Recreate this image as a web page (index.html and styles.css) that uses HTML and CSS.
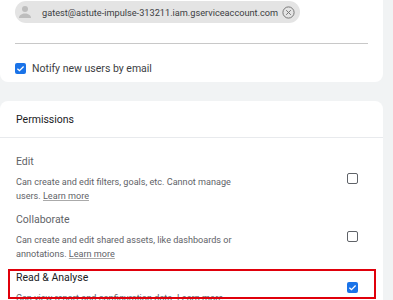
FILE: index.html
```html
<!DOCTYPE html>
<html>
<head>
<meta charset="utf-8">
<link rel="stylesheet" href="styles.css">
</head>
<body>
<div class="page">
  <div class="card card-top">
    <div class="chip">
      <svg class="avatar" viewBox="0 0 16 16" width="16" height="16"><circle cx="8" cy="5" r="3" fill="#bdbdbd"/><path d="M2 14c0-3 3-4.5 6-4.5s6 1.5 6 4.5z" fill="#bdbdbd"/></svg>
      <span class="chip-text">gatest@astute-impulse-313211.iam.gserviceaccount.com</span>
      <svg class="close" viewBox="0 0 13 13" width="13" height="13"><circle cx="6.5" cy="6.5" r="5.6" fill="none" stroke="#777" stroke-width="1"/><path d="M4.2 4.2l4.6 4.6M8.8 4.2l-4.6 4.6" stroke="#777" stroke-width="1"/></svg>
    </div>
    <div class="divider"></div>
    <label class="notify">
      <span class="cb checked"><svg viewBox="0 0 12 12" width="11" height="11"><path d="M2.6 6.2l2.3 2.2 4.5-4.6" fill="none" stroke="#fff" stroke-width="1.4"/></svg></span>
      <span class="notify-text">Notify new users by email</span>
    </label>
  </div>
  <div class="card card-perm">
    <div class="perm-head">Permissions</div>
    <div class="perm-list">
      <div class="perm-row">
        <div class="perm-info">
          <div class="perm-title">Edit</div>
          <div class="perm-desc">Can create and edit filters, goals, etc. Cannot manage users. <span class="link">Learn more</span></div>
        </div>
        <span class="cb"></span>
      </div>
      <div class="perm-row">
        <div class="perm-info">
          <div class="perm-title">Collaborate</div>
          <div class="perm-desc">Can create and edit shared assets, like dashboards or annotations. <span class="link">Learn more</span></div>
        </div>
        <span class="cb"></span>
      </div>
      <div class="perm-row highlight">
        <div class="perm-info">
          <div class="perm-title strong">Read &amp; Analyse</div>
          <div class="perm-desc">Can view report and configuration data. <span class="link">Learn more</span></div>
        </div>
        <span class="cb checked"><svg viewBox="0 0 12 12" width="11" height="11"><path d="M2.6 6.2l2.3 2.2 4.5-4.6" fill="none" stroke="#fff" stroke-width="1.4"/></svg></span>
      </div>
    </div>
  </div>
</div>
</body>
</html>
```
FILE: styles.css
```css
html, body {
  margin: 0;
  padding: 0;
  background: #f1f3f4;
  font-family: Roboto, "Liberation Sans", Arial, sans-serif;
  color: #3c4043;
  overflow: hidden;
  height: 300px;
}
.page {
  width: 383px;
}
.card {
  background: #fff;
}
.card-top {
  border-radius: 0 0 8px 8px;
  padding: 1px 15px 0;
  height: 82px;
  box-sizing: border-box;
}
.chip {
  display: inline-flex;
  align-items: center;
  height: 22px;
  background: #e4e4e4;
  border-radius: 11px;
  padding: 0 5px 0 2px;
  box-sizing: border-box;
}
.avatar {
  display: block;
  margin-right: 9px;
}
.chip-text {
  font-size: 9.2px;
  color: #3c4043;
  margin-right: 4px;
  white-space: nowrap;
}
.close {
  display: block;
}
.divider {
  height: 1px;
  background: #c8c8c8;
  margin-top: 19px;
}
.notify {
  display: flex;
  align-items: center;
  margin-top: 19px;
  height: 11px;
}
.notify-text {
  font-size: 10.5px;
  margin-left: 6px;
  color: #3c4043;
}
.cb {
  display: block;
  flex: none;
  width: 11px;
  height: 11px;
  box-sizing: border-box;
  border: 1.5px solid #5f6368;
  border-radius: 2px;
}
.cb.checked {
  border: none;
  background: #1a73e8;
}
.cb svg {
  display: block;
}
.card-perm {
  margin-top: 19px;
  border-radius: 8px 8px 0 0;
  height: 220px;
}
.perm-head {
  height: 36px;
  line-height: 37px;
  padding-left: 16px;
  font-size: 10.5px;
  color: #202124;
  border-bottom: 1px solid #e8eaed;
}
.perm-list {
  padding-top: 11px;
}
.perm-row {
  position: relative;
  display: flex;
  align-items: center;
  padding: 5px 25px 4px 16px;
}
.perm-info {
  flex: 1;
}
.perm-title {
  font-size: 10.5px;
  line-height: 16px;
  color: #5f6368;
}
.perm-title.strong {
  color: #202124;
}
.perm-desc {
  margin-top: 5px;
  font-size: 9.1px;
  line-height: 14px;
  color: #5f6368;
  width: 240px;
}
.link {
  text-decoration: underline;
  text-decoration-color: #aaa;
}
.highlight::after {
  content: "";
  position: absolute;
  left: 8px;
  right: 7px;
  top: 4px;
  height: 30px;
  border: 2px solid #e0000b;
  box-sizing: border-box;
  pointer-events: none;
}
```
